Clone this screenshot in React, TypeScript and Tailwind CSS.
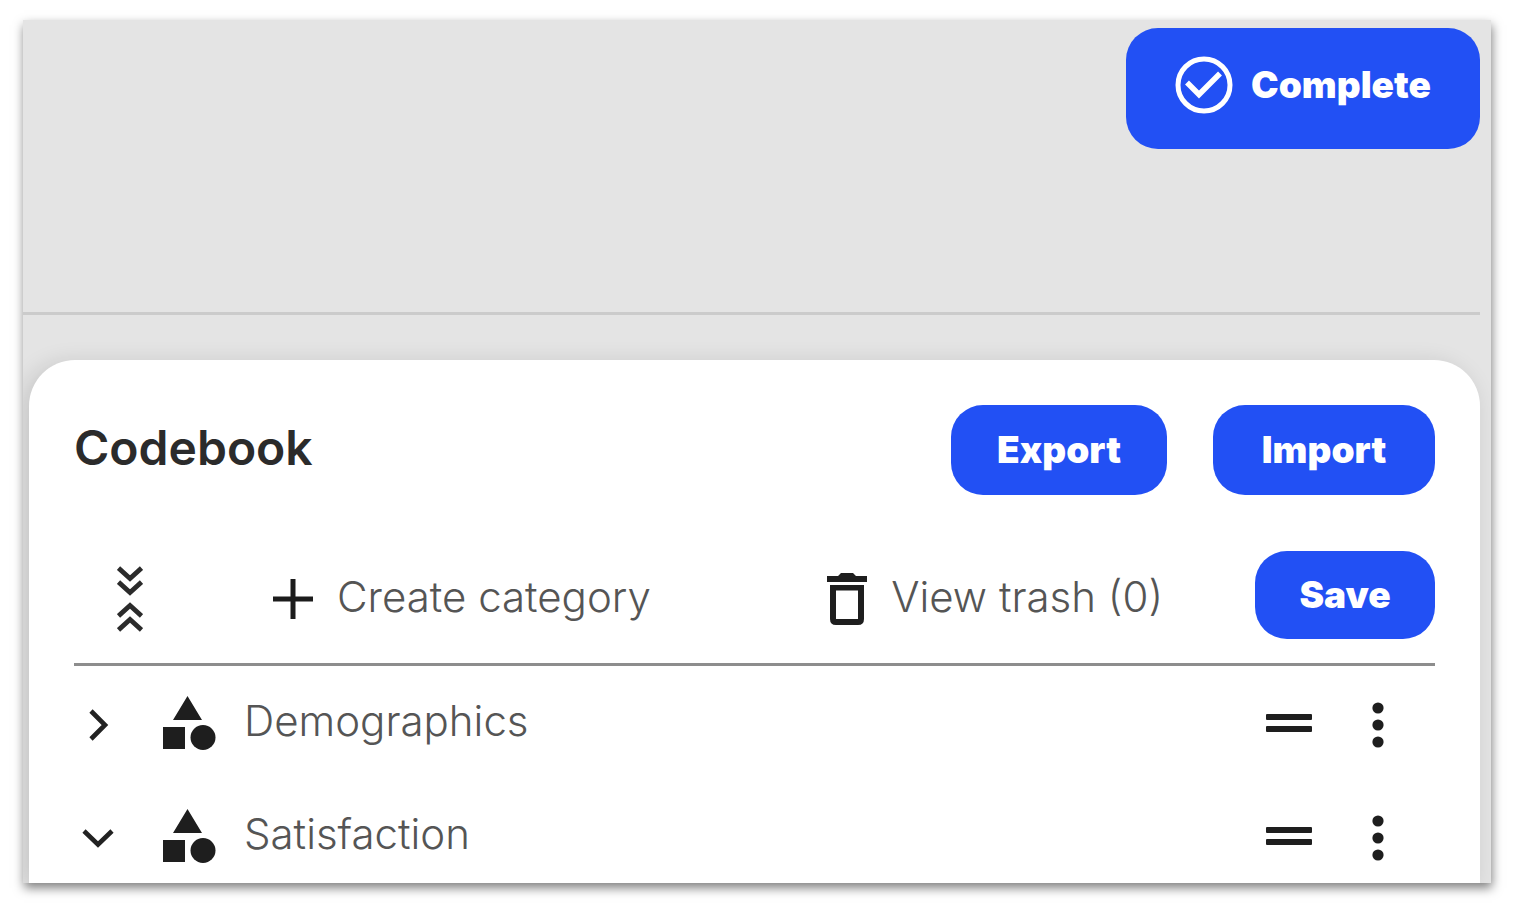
import type { ReactNode } from "react";

const primary =
  "flex shrink-0 items-center justify-center rounded-[32px] bg-[#2250f4] font-black text-white text-[37px] leading-[40px]";

function CheckCircleIcon() {
  return (
    <svg width="58" height="58" viewBox="0 0 58 58" fill="none" stroke="#fff" aria-hidden="true">
      <circle cx="29" cy="29" r="26" strokeWidth="5" />
      <path d="M12 26.500 24 38.500 45 17.500" strokeWidth="5.5" />
    </svg>
  );
}

function CollapseIcon() {
  return (
    <svg width="26" height="66" viewBox="0 0 26 66" fill="none" stroke="#2b2b2b" strokeWidth="4.8" aria-hidden="true">
      <path d="M1.500 2 13 12.500 24.500 2M1.500 16 13 26.500 24.500 16M1.500 50 13 39.500 24.500 50M1.500 64 13 53.500 24.500 64" />
    </svg>
  );
}

function PlusIcon() {
  return (
    <svg width="40" height="40" viewBox="0 0 40 40" fill="none" stroke="#1c1c1c" strokeWidth="5" aria-hidden="true">
      <path d="M20 0V40M0 20H40" />
    </svg>
  );
}

function TrashIcon() {
  return (
    <svg width="40" height="52" viewBox="0 0 40 52" aria-hidden="true">
      <path fill="#1e1e1e" d="M0 3H11L14 0H26L29 3H40V9H0Z" />
      <path
        fill="#1e1e1e"
        fillRule="evenodd"
        d="M3 12H37V46Q37 52 31 52H9Q3 52 3 46ZM9 17.500V46H31V17.500Z"
      />
    </svg>
  );
}

function Chevron({ open }: { open: boolean }) {
  return (
    <svg width="32" height="32" viewBox="0 0 32 32" fill="none" stroke="#222" strokeWidth="4.6" aria-hidden="true">
      <path d={open ? "M2 9 16 22.500 30 9" : "M9 2 23 16 9 30"} />
    </svg>
  );
}

function ShapesIcon() {
  return (
    <svg width="54" height="54" viewBox="0 0 54 54" fill="#1e1e1e" aria-hidden="true">
      <path d="M25.500 0 40 24H11ZM1 31H23V53H1Z" />
      <circle cx="41" cy="41.500" r="12.500" />
    </svg>
  );
}

function HandleIcon() {
  return (
    <svg width="46" height="18" viewBox="0 0 46 18" fill="#1e1e1e" aria-hidden="true">
      <rect y="0" width="46" height="6" rx="1" />
      <rect y="12" width="46" height="6" rx="1" />
    </svg>
  );
}

function DotsIcon() {
  return (
    <svg width="12" height="46" viewBox="0 0 12 46" fill="#1e1e1e" aria-hidden="true">
      <circle cx="6" cy="6" r="5.6" />
      <circle cx="6" cy="23" r="5.6" />
      <circle cx="6" cy="40" r="5.6" />
    </svg>
  );
}

function ToolButton({ icon, children }: { icon: ReactNode; children: ReactNode }) {
  return (
    <button type="button" className="flex items-center gap-6 text-[42px] leading-[48px] font-light text-[#555]">
      <span className="pt-2">{icon}</span>
      <span className="pt-1">{children}</span>
    </button>
  );
}

function CategoryRow({ name, open }: { name: string; open: boolean }) {
  return (
    <li className="flex h-[60px] items-center pr-[51px] pl-2">
      <button type="button" aria-expanded={open} aria-label={`Toggle ${name}`} className="pt-1">
        <Chevron open={open} />
      </button>
      <span className="ml-12">
        <ShapesIcon />
      </span>
      <span className="ml-7 pb-1 text-[42px] leading-[48px] font-light text-[#555]">{name}</span>
      <button type="button" aria-label={`Reorder ${name}`} className="ml-auto">
        <HandleIcon />
      </button>
      <button type="button" aria-label={`Options for ${name}`} className="ml-[60px] pt-1">
        <DotsIcon />
      </button>
    </li>
  );
}

const categories = [
  { name: "Demographics", open: false },
  { name: "Satisfaction", open: true },
];

export default function App() {
  return (
    <div className="min-h-screen bg-white pt-5 pr-[31px] pb-[23px] pl-[23px] font-['Inter','Liberation_Sans',sans-serif]">
      <div className="bg-[#e4e4e4] shadow-[1px_5px_10px_rgba(0,0,0,0.5)]">
        <main className="overflow-hidden pt-2 pr-[11px]">
          <header className="flex h-[287px] items-start justify-end border-b-3 border-[#cbcbcb]">
            <button type="button" className={`${primary} h-[121px] w-[354px] gap-[18px] pb-2`}>
              <CheckCircleIcon />
              <span>Complete</span>
            </button>
          </header>

          <section className="mt-[45px] ml-[6px] rounded-t-[46px] bg-white px-[45px] pt-[45px] shadow-[-6px_4px_24px_rgba(0,0,0,0.14)]">
            <div className="flex items-center gap-[46px]">
              <h1 className="mr-auto pb-1 text-[48px] leading-[56px] font-semibold text-[#2b2b2b]">Codebook</h1>
              <button type="button" className={`${primary} h-[90px] w-[216px]`}>Export</button>
              <button type="button" className={`${primary} h-[90px] w-[222px]`}>Import</button>
            </div>

            <div className="mt-14 flex items-center border-b-3 border-[#8d8d8d] pb-6">
              <button type="button" aria-label="Collapse all" className="mr-[130px] ml-[43px] pt-2">
                <CollapseIcon />
              </button>
              <ToolButton icon={<PlusIcon />}>Create category</ToolButton>
              <div className="mr-[92px] ml-auto">
                <ToolButton icon={<TrashIcon />}>View trash (0)</ToolButton>
              </div>
              <button type="button" className={`${primary} h-[88px] w-[180px]`}>Save</button>
            </div>

            <ul className="flex flex-col gap-[53px] pt-[27px] pb-[17px]">
              {categories.map((c) => (
                <CategoryRow key={c.name} name={c.name} open={c.open} />
              ))}
            </ul>
          </section>
        </main>
      </div>
    </div>
  );
}
